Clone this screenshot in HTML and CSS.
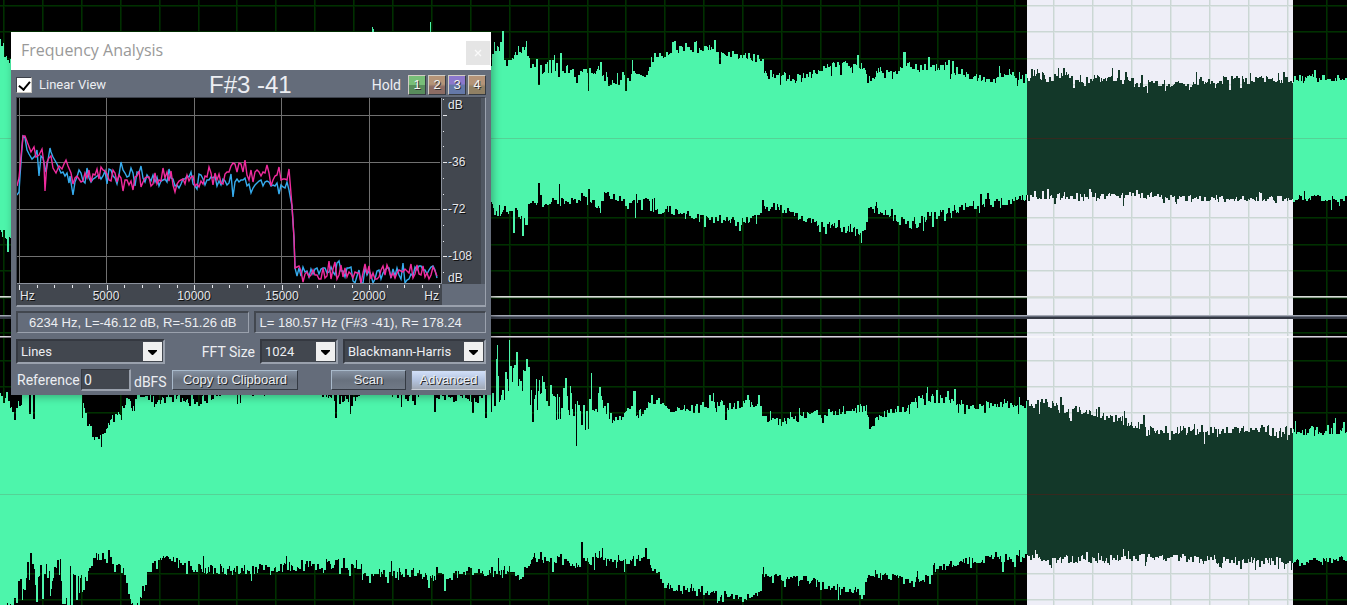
FILE: index.html
```html
<!DOCTYPE html>
<html lang="en">
<head>
<meta charset="utf-8">
<title>Frequency Analysis</title>
<link rel="stylesheet" href="styles.css">
</head>
<body>
<main class="editor">
  <svg class="wave" id="wave" viewBox="0 0 1347 605" preserveAspectRatio="none" role="img" aria-label="Stereo waveform"></svg>

  <section class="dialog" role="dialog" aria-labelledby="dialog-title">
    <header class="titlebar">
      <h1 class="title" id="dialog-title">Frequency Analysis</h1>
      <button class="close" type="button" aria-label="Close">
        <svg viewBox="0 0 8 8" width="8" height="8"><path d="M1 1l6 6M7 1l-6 6" stroke="#fafafa" stroke-width="1.3"/></svg>
      </button>
    </header>

    <div class="body">
      <div class="top">
        <label class="check"><input type="checkbox" checked>Linear View</label>
        <output class="note">F#3 -41</output>
        <div class="hold">
          <span class="hold-label">Hold</span>
          <button class="slot slot-green" type="button">1</button>
          <button class="slot slot-brown" type="button">2</button>
          <button class="slot slot-blue" type="button">3</button>
          <button class="slot slot-tan" type="button">4</button>
        </div>
      </div>

      <div class="chart">
        <svg class="spectrum" id="spectrum" viewBox="0 0 468 207" role="img" aria-label="Frequency spectrum"></svg>
      </div>

      <div class="status">
        <output class="readout">6234 Hz, L=-46.12 dB, R=-51.26 dB</output>
        <output class="readout readout-start">L= 180.57 Hz (F#3 -41), R= 178.24</output>
      </div>

      <div class="options">
        <span class="picker picker-lines">
          <select aria-label="Display style"><option>Lines</option></select>
          <svg class="arrow" viewBox="0 0 19 19"><path d="M5 8h9v1l-4 4h-1l-4-4z"/></svg>
        </span>
        <label class="fft-label" for="fft">FFT Size</label>
        <span class="picker picker-fft">
          <select id="fft"><option>1024</option></select>
          <svg class="arrow" viewBox="0 0 19 19"><path d="M5 8h9v1l-4 4h-1l-4-4z"/></svg>
        </span>
        <span class="picker picker-window">
          <select aria-label="Window function"><option>Blackmann-Harris</option></select>
          <svg class="arrow" viewBox="0 0 19 19"><path d="M5 8h9v1l-4 4h-1l-4-4z"/></svg>
        </span>
      </div>

      <div class="actions">
        <label class="ref-label" for="ref">Reference</label>
        <input class="ref" id="ref" type="text" value="0">
        <span class="unit">dBFS</span>
        <button class="btn btn-copy" type="button">Copy to Clipboard</button>
        <button class="btn btn-scan" type="button">Scan</button>
        <button class="btn btn-active" type="button">Advanced</button>
      </div>
    </div>
  </section>
</main>
<script src="app.js"></script>
</body>
</html>
```
FILE: styles.css
```css
* { box-sizing: border-box; }
body { margin: 0; background: #000; font-family: "Liberation Sans", Arial, sans-serif; }
button, input, select { font: inherit; margin: 0; padding: 0; border-radius: 0; }

.editor { position: relative; height: 100vh; overflow: hidden; }
.wave { display: block; width: 100%; height: 100%; shape-rendering: crispEdges; }

.dialog {
  position: absolute;
  left: 11px;
  top: 32px;
  width: 480px;
  background: #646c7a;
  color: #eceef2;
  font-family: Roboto, "Liberation Sans", sans-serif;
  font-size: 14px;
  line-height: 18px;
  box-shadow: 2px 2px 8px rgba(0, 0, 0, .3);
}
.titlebar {
  display: flex;
  align-items: center;
  justify-content: space-between;
  height: 38px;
  padding: 6px 1px 0 10px;
  background: #fff;
}
.title {
  margin: 0 0 8px;
  font: 400 16px/22px "Open Sans", "Noto Sans", sans-serif;
  color: #999;
}
.close {
  display: grid;
  place-items: center;
  width: 24px;
  height: 24px;
  margin-bottom: 2px;
  border: 0;
  background: #e5e5e5;
}
.body { padding: 3px 5px 4px 5px; }

.top { display: flex; align-items: center; justify-content: space-between; height: 24px; }
.check { display: flex; align-items: center; gap: 7px; width: 191px; font-size: 13px; }
.check input {
  appearance: none;
  position: relative;
  width: 16px;
  height: 16px;
  background: #fff;
  border: 1px solid;
  border-color: #3d414a #c9c6bf #c9c6bf #3d414a;
}
.check input:checked::after {
  content: "";
  position: absolute;
  left: 4px;
  top: 1px;
  width: 5px;
  height: 9px;
  border: solid #000;
  border-width: 0 2px 2px 0;
  transform: rotate(40deg);
}
.note { flex: 1; font: 24px/24px "Liberation Sans", Arial, sans-serif; padding-left: 2px; }
.hold { display: flex; align-items: center; gap: 2px; }
.hold-label { margin-right: 5px; }
.slot {
  width: 18px;
  height: 20px;
  border: 1px solid;
  border-color: #d0ccc4 #363b42 #363b42 #d0ccc4;
  color: #f4f4f4;
  font: 13px/16px "Liberation Sans", Arial, sans-serif;
  text-shadow: 1px 1px 0 #333;
}
.slot-green { background: linear-gradient(#78be78 50%, #588c5c 50%); }
.slot-brown { background: linear-gradient(#b49478 45%, #8c6c64 60%); }
.slot-blue { background: linear-gradient(#8c78cc 45%, #6478a8 50%); }
.slot-tan { background: linear-gradient(#b49478 45%, #908064 60%); }

.chart {
  border: 1px solid;
  border-width: 1px 1px 2px 1px;
  border-color: #3c414b #9aa1ad #9aa1ad #3c414b;
}
.spectrum { display: block; width: 100%; }
.spectrum text {
  fill: #e6e8ec;
  font: 12px "Liberation Sans", Arial, sans-serif;
  text-shadow: 1px 1px 0 #111;
}

.status { display: grid; grid-template-columns: 1fr 1fr; gap: 5px; margin-top: 4px; }
.readout {
  height: 22px;
  border: 2px solid;
  border-color: #42474f #9aa1ad #9aa1ad #42474f;
  border-width: 2px 1px 1px 2px;
  font: 13px/19px "Liberation Sans", Arial, sans-serif;
  text-align: center;
  white-space: nowrap;
  overflow: hidden;
}
.readout-start { text-align: left; padding-left: 4px; }

.options { display: flex; align-items: center; gap: 5px; margin-top: 6px; }
.picker {
  position: relative;
  height: 25px;
  border: 2px solid;
  border-color: #343840 #9aa1ad #9aa1ad #343840;
  background: #42474f;
}
.picker select {
  appearance: none;
  width: 100%;
  height: 100%;
  padding: 0 22px 0 3px;
  border: 0;
  background: transparent;
  color: inherit;
  font-size: 13px;
}
.arrow { position: absolute; right: 1px; top: 1px; width: 19px; height: 19px; background: #f0f0f0; pointer-events: none; }
.picker-lines { width: 149px; }
.fft-label { flex: 1; text-align: right; }
.picker-fft { width: 78px; }
.picker-window { width: 143px; }

.actions { display: flex; align-items: center; margin-top: 5px; }
.ref-label { width: 65px; padding-left: 1px; }
.ref {
  width: 50px;
  height: 22px;
  padding-left: 2px;
  border: 1px solid;
  border-color: #343840 #9aa1ad #9aa1ad #343840;
  border-width: 1px 2px 2px 1px;
  background: #42474f;
  color: inherit;
}
.unit { width: 41px; padding: 4px 0 0 3px; }
.btn {
  height: 20px;
  border: 1px solid;
  border-color: #a9bacb #343a43 #343a43 #a9bacb;
  background: linear-gradient(#8490a0, #68717e 50%, #707986);
  color: #eceef2;
  font: 13px/18px "Liberation Sans", Arial, sans-serif;
  text-shadow: 1px 1px 0 #222;
  white-space: nowrap;
}
.btn-copy { width: 126px; }
.btn-scan { width: 75px; margin: 0 5px 0 auto; }
.btn-active { width: 75px; border-color: #70777f #c8cdd6 #c8cdd6 #70777f; background: linear-gradient(#d2e0f8, #b4c4e0 50%, #a0a8b4); }
```
FILE: app.js
```js
// Small seeded generator so the drawing is the same on every load.
function seeded(seed) {
  return () => {
    seed = (seed * 1664525 + 1013904223) >>> 0;
    return seed / 4294967296;
  };
}

// "x,y x,y ..." -> [[x, y], ...]
const pts = s => s.trim().split(/\s+/).map(p => p.split(',').map(Number));

function level(list, x) {
  let i = 1;
  while (i < list.length - 1 && list[i][0] < x) i++;
  const [x0, y0] = list[i - 1], [x1, y1] = list[i];
  return y0 + (y1 - y0) * Math.min(1, Math.max(0, (x - x0) / (x1 - x0)));
}

// Stepped edge: envelope plus column jitter plus [x, y] spikes.
function edge(base, spikes, seed, amp) {
  const rnd = seeded(seed), out = [];
  let x = 0;
  while (x < 1347) {
    const w = rnd() < .55 ? 1 : 2;
    const a = amp(x);
    let n = (rnd() - .5) * a;
    if (rnd() < .16) n *= 2.4;
    let y = Math.round(level(base, x) + n);
    for (const s of spikes) if (s[0] >= x && s[0] < x + w) y = s[1];
    out.push([x, y], [x + w, y]);
    x += w;
  }
  return out;
}

const top1 = edge(
  pts('0,36 1,50 5,54 11,64 12,80 491,66 493,45 502,54 506,64 511,62 518,50 526,49 528,68 540,71 560,70 580,71 600,72 604,78 616,84 630,79 636,72 640,79 645,73 650,62 660,59 668,51 676,49 690,51 710,48 722,54 740,56 762,60 765,78 770,73 780,76 800,78 815,74 822,68 840,65 865,66 867,79 875,80 877,69 890,72 905,67 930,67 945,69 960,72 970,77 990,79 1005,75 1027,78 1035,72 1045,78 1060,75 1075,79 1110,78 1140,83 1180,83 1210,80 1293,79 1347,77'),
  pts('372,27 373,29 430,22 494,42 500,42 503,31 536,82 537,59 547,62 553,60 561,53 576,83 588,91 600,62 632,60 675,41 685,43 714,40 719,64 904,52 905,52 929,57 948,60 1064,68 1147,93'), 7,
  x => x < 527 ? 8 : x < 610 ? 15 : 9);
const bot1 = edge(
  pts('0,233 12,238 491,212 500,214 507,207 515,211 526,222 528,200 540,204 560,202 575,203 590,201 600,209 604,195 620,199 640,203 648,201 655,210 680,211 690,218 720,219 740,222 760,217 763,206 780,208 800,216 815,223 840,227 865,235 867,210 885,214 905,223 915,226 930,218 945,212 960,208 980,204 1000,202 1027,197 1150,195 1200,199 1293,198 1347,199'),
  pts('8,252 514,233 523,236 539,183 559,184 588,189 635,218 705,227 740,231 763,200 825,234 861,243 933,227 1054,204 1123,206 1331,210'), 21, x => x < 1027 ? 9 : 7);
const top2 = edge(
  pts('0,395 3,400 6,394 14,414 21,406 23,390 81,391 84,410 88,427 97,440 102,436 108,422 120,414 127,401 134,410 136,394 157,402 172,396 205,400 215,391 300,388 330,392 337,400 357,399 359,385 400,392 415,400 425,390 450,398 470,395 480,400 491,385 500,388 510,380 520,385 527,396 541,392 556,402 565,405 575,412 588,418 595,395 605,408 612,420 622,420 626,412 635,415 645,412 650,402 665,401 667,411 685,407 715,404 735,405 760,404 763,418 775,422 790,421 805,415 820,414 835,412 866,408 869,425 880,415 900,410 915,402 925,397 945,400 960,404 975,407 985,403 1027,404 1045,403 1060,409 1090,412 1110,418 1130,422 1150,429 1180,431 1240,430 1293,431 1347,428'),
  pts('14,420 30,414 33,419 82,418 336,418 435,412 472,413 486,418 497,345 506,372 517,352 523,370 524,371 533,422 541,393 556,420 570,386 588,429 600,387 633,391 634,391 651,395 726,420 748,395 759,395 869,429 936,390 955,389 1060,397 1147,436 1170,440'), 33,
  x => x < 140 ? 9 : x < 490 ? 13 : x < 600 ? 34 : x < 1130 ? 9 : 11);
const bot2 = edge(
  pts('0,626 11,605 16,592 20,578 30,568 40,578 50,582 60,575 75,578 86,576 90,562 100,556 118,561 124,575 130,595 133,606 139,606 142,588 152,566 165,561 180,563 200,569 230,571 260,569 300,566 340,564 357,565 360,576 372,578 380,573 410,573 430,577 450,578 470,572 490,572 505,569 520,576 525,566 535,556 545,561 560,559 575,563 590,560 600,556 620,559 632,564 645,554 652,568 662,584 680,589 700,591 720,596 740,597 761,594 762,573 775,577 800,579 830,587 850,590 863,593 866,574 880,575 895,578 910,581 925,578 938,569 950,565 965,560 1027,558 1100,560 1150,556 1200,560 1293,562 1347,560'),
  pts('22,600 30,553 36,602 42,599 43,599 57,560 63,604 64,604 67,605 69,605 72,605 76,600 79,593 83,590 429,588 445,591 581,542 624,572 646,548 717,603 742,602 763,567 838,600 862,599 1002,572 1051,568 1123,549'), 55,
  x => x > 15 && x < 86 ? 32 : x < 650 ? 11 : 8);

const area = (a, b) => 'M' + a.concat(b.slice().reverse()).map(p => p.join(' ')).join('L') + 'Z';
const wave1 = area(top1, bot1), wave2 = area(top2, bot2);

function layer(id, bg, grid, soft, fill, mid) {
  let s = `<g clip-path="url(#${id})"><rect width="1347" height="605" fill="${bg}"/>`;
  const ys = [5, 31, 58, 84, 217, 244, 270, 297, 332, 360, 386, 412, 573, 599];
  const xs = Array.from({ length: 35 }, (_, i) => Math.round(4 + i * 38.9));
  for (const x of xs) s += `<rect x="${x - 1}" width="2" height="605" fill="${soft}"/>`;
  for (const y of ys) s += `<rect y="${y}" width="1347" height="2" fill="${soft}"/>`;
  for (const x of xs) s += `<rect x="${x - 1}" width="1" height="605" fill="${grid}"/>`;
  for (const y of ys) s += `<rect y="${y}" width="1347" height="1" fill="${grid}"/>`;
  s += `<path d="${wave1}" fill="${fill}"/><path d="${wave2}" fill="${fill}"/>`;
  s += `<rect y="138" width="1347" height="1" fill="${mid}"/><rect y="494" width="1347" height="1" fill="${mid}"/></g>`;
  return s;
}
document.getElementById('wave').innerHTML =
  '<clipPath id="all"><rect width="1347" height="605"/></clipPath>' +
  '<clipPath id="sel"><rect x="1027" width="266" height="605"/></clipPath>' +
  layer('all', '#000', '#003000', '#001c00', '#4df5ab', '#55d296') +
  layer('sel', '#eeeef7', '#cbd7d4', '#dde4e6', '#133829', '#36291f') +
  '<rect y="296" width="1347" height="1" fill="#d8dcd8"/><rect y="297" width="1347" height="1" fill="#8a9a8a"/>' +
  '<rect y="336" width="1347" height="1" fill="#d8d4dc"/><rect y="337" width="1347" height="1" fill="#77727a"/>' +
  '<rect x="1027" y="297" width="266" height="1" fill="#d0dad8"/><rect x="1027" y="336" width="266" height="2" fill="#f6f6fa"/>' +
  '<rect y="315" width="1347" height="1" fill="#a4a8b4"/><rect y="316" width="1347" height="1" fill="#646b7a"/><rect y="317" width="1347" height="2" fill="#343844"/>';

// Spectrum: hand-set attack, jittered plateau, cut-off near 16 kHz, floor.
function trace(start, mid, floor, seed) {
  const rnd = seeded(seed), p = pts(start);
  for (let x = p[p.length - 1][0] + 2; x < 274; x += 2) p.push([x, Math.round(level(mid, x) + (rnd() - .5) * (rnd() < .2 ? 26 : 14))]);
  p.push([275, 108], [277, 140], [278, 170]);
  for (let x = 280; x < 422; x += 2) p.push([x, Math.min(185, Math.round(floor + (rnd() - .5) * (rnd() < .3 ? 26 : 14)))]);
  return p.map(q => q.join(',')).join(' ');
}
const blue = trace('0,97 2,94 3,78 5,50 6,38 8,40 10,52 12,56 15,61 18,58 20,52 22,78 24,58 26,60 29,74 31,62 33,50 34,54 36,59 40,66 44,75 46,74 48,78 50,75 52,85 53,78 56,97 58,84',
  pts('60,82 85,78 105,76 120,80 150,84 190,82 220,87 245,82 258,92 274,90'), 175, 91);
const pink = trace('0,88 2,80 4,58 6,38 8,38 11,46 14,54 17,49 19,59 22,57 25,51 27,66 28,93 30,64 32,60 34,58 36,70 39,75 42,68 45,71 47,66 49,62 51,68 54,75 56,86 58,80',
  pts('60,82 85,76 105,84 130,82 150,80 180,83 205,80 218,70 240,78 260,74 274,78'), 174, 17);

let s = '<rect width="468" height="207" fill="#646c7a"/><rect width="425" height="186" fill="#000"/>' +
  '<rect x="425" width="39" height="186" fill="#42474f"/><rect x="464" width="4" height="186" fill="#505762"/><rect y="186" width="425" height="21" fill="#42474f"/>';
for (const x of [2, 89, 177, 264, 352]) s += `<rect x="${x}" width="1" height="185" fill="#707070"/>`;
for (const y of [17, 64, 111, 158]) s += `<rect y="${y}" width="423" height="1" fill="#707070"/>`;
s += `<g fill="none" stroke-width="1.4"><polyline points="${blue}" stroke="#35abed"/><polyline points="${pink}" stroke="#f02b9d"/></g>`;
s += '<rect y="185" width="425" height="1" fill="#8b919c"/><rect x="424" width="1" height="186" fill="#8b919c"/>';
for (let i = 0; i < 25; i++) s += `<rect x="${Math.round(2 + i * 17.5)}" y="187" width="1" height="${i % 5 ? 3 : 5}" fill="#e6e8ec"/>`;
for (let i = -1; i < 11; i++) {
  const major = i % 3 === 0;
  s += `<rect x="426" y="${Math.round(17 + i * 15.7)}" width="${major ? 4 : 1}" height="1" fill="#e6e8ec"/>`;
}
for (const [x, y, t, a] of [[431, 11, 'dB'], [431, 68, '-36'], [431, 115, '-72'], [431, 162, '-108'], [431, 184, 'dB'],
  [3, 202, 'Hz'], [89, 202, '5000', 'middle'], [177, 202, '10000', 'middle'], [265, 202, '15000', 'middle'], [352, 202, '20000', 'middle'], [422, 202, 'Hz', 'end']])
  s += `<text x="${x}" y="${y}" text-anchor="${a || 'start'}">${t}</text>`;
document.getElementById('spectrum').innerHTML = s;
```
